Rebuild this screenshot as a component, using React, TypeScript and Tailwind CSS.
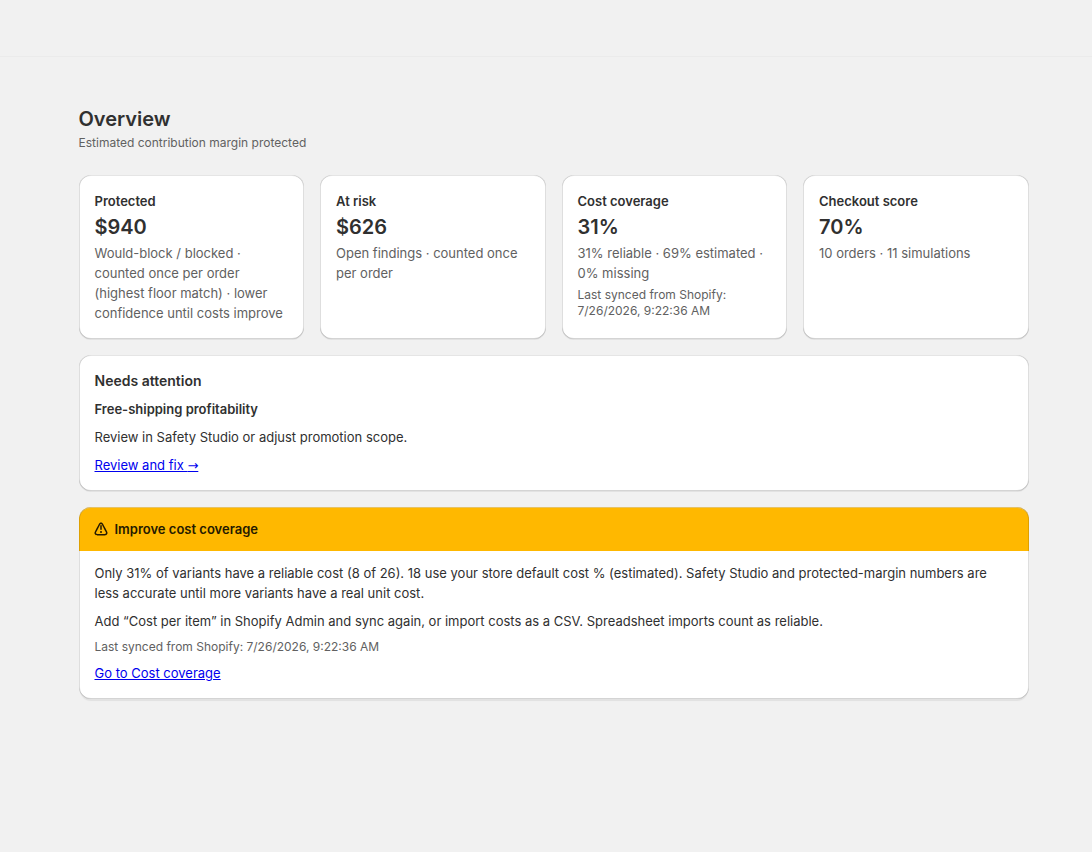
import type { ReactNode } from "react";

const cardFrame =
  "relative rounded-xl bg-white after:pointer-events-none after:absolute after:inset-0 after:rounded-xl after:shadow-[inset_0_-1px_0_0_rgba(0,0,0,0.17),inset_1px_0_0_0_rgba(0,0,0,0.13),inset_-1px_0_0_0_rgba(0,0,0,0.13),inset_0_1px_0_0_rgba(204,204,204,0.5)]";

function Card({ children }: { children: ReactNode }) {
  return <section className={`${cardFrame} p-4 shadow-[0_1px_0_0_rgba(26,26,26,0.07)]`}>{children}</section>;
}

function Metric({ title, value, note, extra }: { title: string; value: string; note: string; extra?: string }) {
  return (
    <Card>
      <h2 className="text-[13px] leading-5 font-semibold">{title}</h2>
      <p className="mt-1 text-xl leading-6 font-semibold">{value}</p>
      <p className="mt-1 text-[13px] leading-5 text-[#616161]">{note}</p>
      {extra && <p className="mt-1 text-xs leading-4 text-[#616161]">{extra}</p>}
    </Card>
  );
}

function WarningIcon() {
  return (
    <svg viewBox="0 0 20 20" className="size-5" fill="currentColor" aria-hidden="true">
      <path d="M10 6a.75.75 0 0 1 .75.75v3.5a.75.75 0 0 1-1.5 0v-3.5A.75.75 0 0 1 10 6Z" />
      <path d="M11 13a1 1 0 1 1-2 0 1 1 0 0 1 2 0Z" />
      <path
        fillRule="evenodd"
        d="M10 3.5c-1.045 0-1.784.702-2.152 1.447a449.26 449.26 0 0 1-2.005 3.847l-.028.052a403.426 403.426 0 0 0-2.008 3.856c-.372.752-.478 1.75.093 2.614.57.863 1.542 1.184 2.464 1.184h7.272c.922 0 1.895-.32 2.464-1.184.57-.864.465-1.862.093-2.614-.21-.424-1.113-2.147-2.004-3.847l-.032-.061a429.497 429.497 0 0 1-2.005-3.847c-.368-.745-1.107-1.447-2.152-1.447Zm-.808 2.112c.404-.816 1.212-.816 1.616 0 .202.409 1.112 2.145 2.022 3.88a418.904 418.904 0 0 1 2.018 3.875c.404.817 0 1.633-1.212 1.633h-7.272c-1.212 0-1.617-.816-1.212-1.633.202-.408 1.113-2.147 2.023-3.883a421.932 421.932 0 0 0 2.017-3.872Z"
      />
    </svg>
  );
}

export default function App() {
  return (
    <div className="min-h-screen bg-[#f1f1f1] font-['Inter',sans-serif] text-[#303030]">
      <header className="h-[57px] border-b border-[#ebebeb]" />
      <div className="pt-[50px] pb-16 pl-[15px]">
        <main className="mx-auto max-w-[950px]">
          <h1 className="text-xl leading-6 font-semibold">Overview</h1>
          <p className="mt-1 text-xs leading-4 text-[#616161]">Estimated contribution margin protected</p>
          <div className="mt-6 grid gap-4">
            <div className="grid grid-cols-4 gap-4">
              <Metric
                title="Protected"
                value="$940"
                note="Would-block / blocked · counted once per order (highest floor match) · lower confidence until costs improve"
              />
              <Metric title="At risk" value="$626" note="Open findings · counted once per order" />
              <Metric
                title="Cost coverage"
                value="31%"
                note="31% reliable · 69% estimated · 0% missing"
                extra="Last synced from Shopify: 7/26/2026, 9:22:36 AM"
              />
              <Metric title="Checkout score" value="70%" note="10 orders · 11 simulations" />
            </div>
            <Card>
              <div className="grid gap-2 text-[13px] leading-5">
                <h2 className="text-sm leading-5 font-semibold">Needs attention</h2>
                <h3 className="font-semibold">Free-shipping profitability</h3>
                <p>Review in Safety Studio or adjust promotion scope.</p>
                <a href="#review" className="justify-self-start text-[#0000ee] underline">
                  Review and fix <span className="font-['DejaVu_Sans',sans-serif] leading-none">→</span>
                </a>
              </div>
            </Card>
            <section className={`${cardFrame} text-[13px] leading-5 shadow-[0_3px_1px_-1px_rgba(26,26,26,0.07)]`}>
              <div className="flex items-center gap-1 rounded-t-xl bg-[#ffb800] p-3 text-[#251a00]">
                <WarningIcon />
                <h2 className="font-semibold">Improve cost coverage</h2>
              </div>
              <div className="grid gap-2 px-4 pt-3 pb-4">
                <p>
                  Only 31% of variants have a reliable cost (8 of 26). 18 use your store default cost % (estimated).
                  Safety Studio and protected-margin numbers are less accurate until more variants have a real unit
                  cost.
                </p>
                <p>
                  Add “Cost per item” in Shopify Admin and sync again, or import costs as a CSV. Spreadsheet imports
                  count as reliable.
                </p>
                <p className="text-xs leading-4 text-[#616161]">Last synced from Shopify: 7/26/2026, 9:22:36 AM</p>
                <a href="#coverage" className="relative z-10 justify-self-start text-[#0000ee] underline">
                  Go to Cost coverage
                </a>
              </div>
            </section>
          </div>
        </main>
      </div>
    </div>
  );
}
